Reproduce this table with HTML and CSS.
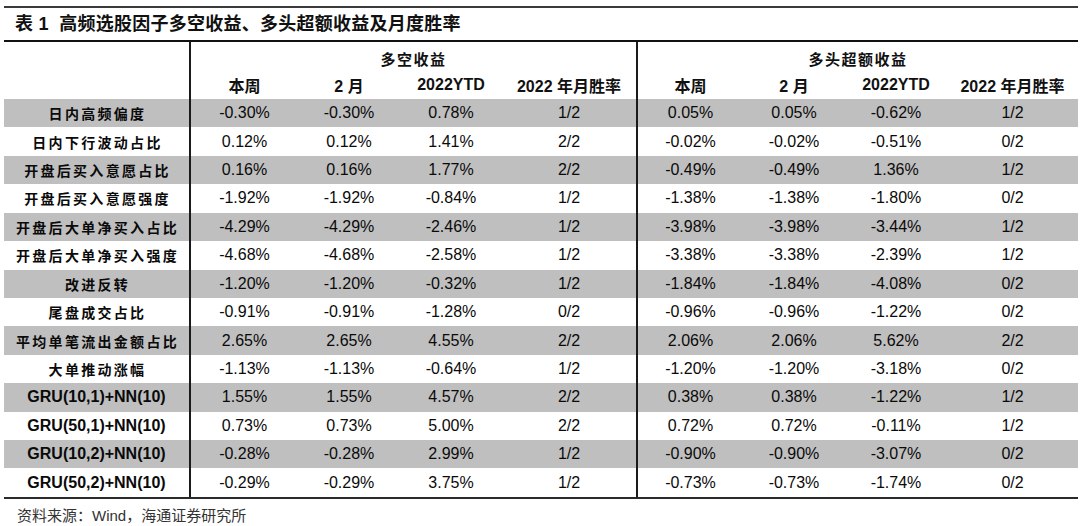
FILE: index.html
```html
<!DOCTYPE html>
<html lang="zh-CN">
<head>
<meta charset="utf-8">
<title>表1</title>
<link rel="stylesheet" href="styles.css">
</head>
<body>
<div class="page">
  <div class="title">表 1&nbsp; 高频选股因子多空收益、多头超额收益及月度胜率</div>
  <div class="table">
    <div class="head">
      <div class="hcell corner"></div>
      <div class="group g1">多空收益</div>
      <div class="group g2">多头超额收益</div>
      <div class="sub">本周</div>
      <div class="sub">2 月</div>
      <div class="sub">2022YTD</div>
      <div class="sub sep">2022 年月胜率</div>
      <div class="sub">本周</div>
      <div class="sub">2 月</div>
      <div class="sub">2022YTD</div>
      <div class="sub">2022 年月胜率</div>
    </div>
    <div class="row gray"><div class="lab cjk">日内高频偏度</div><div>-0.30%</div><div>-0.30%</div><div>0.78%</div><div class="sep">1/2</div><div>0.05%</div><div>0.05%</div><div>-0.62%</div><div>1/2</div></div>
    <div class="row"><div class="lab cjk">日内下行波动占比</div><div>0.12%</div><div>0.12%</div><div>1.41%</div><div class="sep">2/2</div><div>-0.02%</div><div>-0.02%</div><div>-0.51%</div><div>0/2</div></div>
    <div class="row gray"><div class="lab cjk">开盘后买入意愿占比</div><div>0.16%</div><div>0.16%</div><div>1.77%</div><div class="sep">2/2</div><div>-0.49%</div><div>-0.49%</div><div>1.36%</div><div>1/2</div></div>
    <div class="row"><div class="lab cjk">开盘后买入意愿强度</div><div>-1.92%</div><div>-1.92%</div><div>-0.84%</div><div class="sep">1/2</div><div>-1.38%</div><div>-1.38%</div><div>-1.80%</div><div>0/2</div></div>
    <div class="row gray"><div class="lab cjk">开盘后大单净买入占比</div><div>-4.29%</div><div>-4.29%</div><div>-2.46%</div><div class="sep">1/2</div><div>-3.98%</div><div>-3.98%</div><div>-3.44%</div><div>1/2</div></div>
    <div class="row"><div class="lab cjk">开盘后大单净买入强度</div><div>-4.68%</div><div>-4.68%</div><div>-2.58%</div><div class="sep">1/2</div><div>-3.38%</div><div>-3.38%</div><div>-2.39%</div><div>1/2</div></div>
    <div class="row gray"><div class="lab cjk">改进反转</div><div>-1.20%</div><div>-1.20%</div><div>-0.32%</div><div class="sep">1/2</div><div>-1.84%</div><div>-1.84%</div><div>-4.08%</div><div>0/2</div></div>
    <div class="row"><div class="lab cjk">尾盘成交占比</div><div>-0.91%</div><div>-0.91%</div><div>-1.28%</div><div class="sep">0/2</div><div>-0.96%</div><div>-0.96%</div><div>-1.22%</div><div>0/2</div></div>
    <div class="row gray"><div class="lab cjk">平均单笔流出金额占比</div><div>2.65%</div><div>2.65%</div><div>4.55%</div><div class="sep">2/2</div><div>2.06%</div><div>2.06%</div><div>5.62%</div><div>2/2</div></div>
    <div class="row"><div class="lab cjk">大单推动涨幅</div><div>-1.13%</div><div>-1.13%</div><div>-0.64%</div><div class="sep">1/2</div><div>-1.20%</div><div>-1.20%</div><div>-3.18%</div><div>0/2</div></div>
    <div class="row gray"><div class="lab">GRU(10,1)+NN(10)</div><div>1.55%</div><div>1.55%</div><div>4.57%</div><div class="sep">2/2</div><div>0.38%</div><div>0.38%</div><div>-1.22%</div><div>1/2</div></div>
    <div class="row"><div class="lab">GRU(50,1)+NN(10)</div><div>0.73%</div><div>0.73%</div><div>5.00%</div><div class="sep">2/2</div><div>0.72%</div><div>0.72%</div><div>-0.11%</div><div>1/2</div></div>
    <div class="row gray"><div class="lab">GRU(10,2)+NN(10)</div><div>-0.28%</div><div>-0.28%</div><div>2.99%</div><div class="sep">1/2</div><div>-0.90%</div><div>-0.90%</div><div>-3.07%</div><div>0/2</div></div>
    <div class="row"><div class="lab">GRU(50,2)+NN(10)</div><div>-0.29%</div><div>-0.29%</div><div>3.75%</div><div class="sep">1/2</div><div>-0.73%</div><div>-0.73%</div><div>-1.74%</div><div>0/2</div></div>
  </div>
  <div class="source">资料来源：Wind，海通证券研究所</div>
</div>
</body>
</html>
```

FILE: styles.css
```css
html, body {
  margin: 0;
  padding: 0;
  background: #ffffff;
}

body {
  font-family: "Liberation Sans", "Noto Sans CJK SC", sans-serif;
  color: #111;
}

.page {
  width: 1074px;
  margin-left: 4px;
  padding-top: 6px;
}

.title {
  border-top: 2px solid #3a3a3a;
  border-bottom: 2px solid #111;
  height: 32px;
  line-height: 32px;
  padding-left: 11px;
  font-size: 18px;
  font-weight: 700;
  letter-spacing: 0.25px;
  color: #111;
}

.table {
  --cols: 187px 107px 102px 102px 136px 105px 102px 102px 131px;
  border-bottom: 2px solid #2a2a2a;
}

.head {
  display: grid;
  grid-template-columns: var(--cols);
  grid-template-rows: 30px 27px;
}

.corner {
  grid-row: 1 / span 2;
  grid-column: 1;
  border-right: 2px solid #1a1a1a;
}

.group {
  display: flex;
  align-items: center;
  justify-content: center;
  font-size: 15px;
  font-weight: 700;
  letter-spacing: 1.5px;
  padding-top: 2px;
}

.g1 {
  grid-column: 2 / span 4;
  border-right: 2px solid #1a1a1a;
}

.g2 {
  grid-column: 6 / span 4;
}

.sub {
  display: flex;
  align-items: center;
  justify-content: center;
  font-size: 16px;
  font-weight: 700;
  padding-bottom: 1px;
}

.row {
  display: grid;
  grid-template-columns: var(--cols);
  height: 28.43px;
  font-size: 16px;
  color: #0a0a0a;
}

.row > div {
  display: flex;
  align-items: center;
  justify-content: center;
}

.gray {
  background: #bfbfbf;
}

.sep {
  border-right: 2px solid #1a1a1a;
  box-sizing: border-box;
}

.lab {
  border-right: 2px solid #1a1a1a;
  box-sizing: border-box;
  font-weight: 700;
  font-size: 16px;
}

.lab.cjk {
  font-size: 14px;
  letter-spacing: 2.3px;
  padding-left: 2px;
}

.source {
  height: 25px;
  line-height: 25px;
  padding-left: 13px;
  padding-top: 4px;
  font-size: 15px;
  letter-spacing: 0;
  color: #333;
}
```
